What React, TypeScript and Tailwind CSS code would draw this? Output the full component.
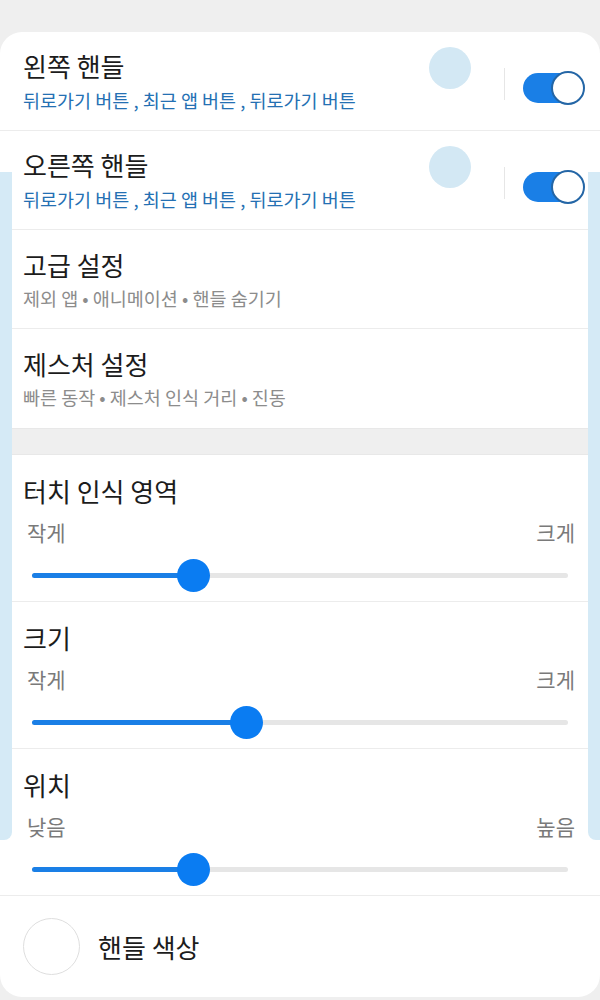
import React from "react";

const font = { fontFamily: '"Noto Sans CJK KR", "Noto Sans", sans-serif' };

function Toggle() {
  return (
    <div className="relative w-[62px] h-[34px]">
      <div className="absolute left-0 top-[2px] w-[58px] h-[30px] rounded-full bg-[#1a7fe6]" />
      <div className="absolute right-0 top-0 w-[34px] h-[34px] rounded-full bg-white border-2 border-[#2466a6]" />
    </div>
  );
}

function HandleRow({ title }: { title: string }) {
  return (
    <div className="flex items-center h-[99px] pl-[23px] pr-[15px] border-b border-[#ececec]">
      <div className="flex-1 flex flex-col">
        <div className="text-[26px] leading-[34px] text-[#1c1c1c]">{title}</div>
        <div className="text-[18.5px] leading-[26px] mt-[4px] text-[#2470b3]">
          뒤로가기 버튼 , 최근 앱 버튼 , 뒤로가기 버튼
        </div>
      </div>
      <div className="self-start mt-[15px] w-[42px] h-[42px] rounded-full bg-[#d3e8f4] mr-[33px]" />
      <div className="w-px h-[32px] bg-[#e6e6e6] mr-[18px] mt-[6px]" />
      <div className="mt-[14px]">
        <Toggle />
      </div>
    </div>
  );
}

function TextRow({ title, sub, last }: { title: string; sub: string; last?: boolean }) {
  return (
    <div className={"flex flex-col justify-center h-[99px] pl-[23px] " + (last ? "" : "border-b border-[#ececec]")}>
      <div className="text-[26px] leading-[34px] text-[#1c1c1c]">{title}</div>
      <div className="text-[18.5px] leading-[26px] mt-[3px] text-[#8c8c8c]">{sub}</div>
    </div>
  );
}

function SliderRow({ title, left, right, pct }: { title: string; left: string; right: string; pct: number }) {
  return (
    <div className="flex flex-col h-[147px] pt-[19px] px-[23px] border-b border-[#ececec]">
      <div className="text-[26px] leading-[34px] text-[#1c1c1c]">{title}</div>
      <div className="flex justify-between pl-[4px] pr-[2px] mt-[10px] text-[21px] leading-[28px] text-[#7a7a7a]">
        <span>{left}</span>
        <span>{right}</span>
      </div>
      <div className="relative h-[32px] mt-[13px] mx-[9px]">
        <div className="absolute left-0 right-0 top-[14px] h-[5px] rounded-full bg-[#e6e6e6]" />
        <div
          className="absolute left-0 top-[14px] h-[5px] rounded-full bg-[#1a7fe6]"
          style={{ width: `${pct}%` }}
        />
        <div
          className="absolute top-0 w-[33px] h-[33px] -ml-[16px] rounded-full bg-[#0a7cf2]"
          style={{ left: `${pct}%` }}
        />
      </div>
    </div>
  );
}

export default function App() {
  return (
    <div className="relative min-h-[1000px] w-[600px] bg-[#efefef] pt-[32px] pb-[3px]" style={font}>
      <div className="bg-white rounded-[22px] overflow-hidden">
        <HandleRow title="왼쪽 핸들" />
        <HandleRow title="오른쪽 핸들" />
        <TextRow title="고급 설정" sub="제외 앱 • 애니메이션 • 핸들 숨기기" />
        <TextRow title="제스처 설정" sub="빠른 동작 • 제스처 인식 거리 • 진동" last />
        <div className="h-[27px] bg-[#efefef] border-t border-b border-[#e8e8e8]" />
        <SliderRow title="터치 인식 영역" left="작게" right="크게" pct={30} />
        <SliderRow title="크기" left="작게" right="크게" pct={40} />
        <SliderRow title="위치" left="낮음" right="높음" pct={30} />
        <div className="flex items-center h-[101px] pl-[23px] gap-[18px]">
          <div className="w-[57px] h-[57px] rounded-full border border-[#dedede] bg-white" />
          <div className="text-[26px] leading-[34px] text-[#1c1c1c]">핸들 색상</div>
        </div>
      </div>
      <div className="absolute left-0 top-[172px] w-[12px] h-[668px] bg-[#d5eaf6] rounded-br-[8px]" />
      <div className="absolute right-0 top-[172px] w-[12px] h-[668px] bg-[#d5eaf6] rounded-bl-[8px]" />
    </div>
  );
}
